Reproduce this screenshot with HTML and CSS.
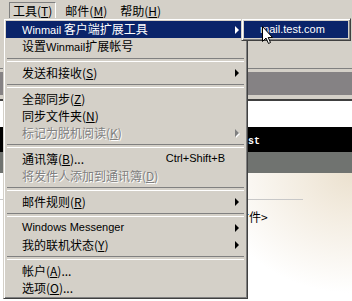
FILE: index.html
```html
<!DOCTYPE html>
<html>
<head>
<meta charset="utf-8">
<link rel="stylesheet" href="styles.css">
</head>
<body>
<div class="screen">
  <div class="menubar">
    <div class="mb-item pressed">工具(<u>T</u>)</div>
    <div class="mb-item">邮件(<u>M</u>)</div>
    <div class="mb-item">帮助(<u>H</u>)</div>
  </div>
  <div class="work">
    <div class="band face b1"></div>
    <div class="band line-mid"></div>
    <div class="band face b2"></div>
    <div class="band toolbar"></div>
    <div class="band face b3"></div>
    <div class="band line-deep"></div>
    <div class="band white"></div>
    <div class="band title"><span class="title-text">test</span></div>
    <div class="band slate"></div>
    <div class="page">
      <div class="rule"></div>
      <div class="attach">无附件&gt;</div>
    </div>
  </div>

  <div class="menu">
    <div class="mi hl"><span class="label"><span class="lat">Winmail</span> 客户端扩展工具</span><span class="arrow"></span></div>
    <div class="mi"><span class="label">设置<span class="lat">Winmail</span>扩展帐号</span></div>
    <div class="sep"></div>
    <div class="mi"><span class="label">发送和接收(<u>S</u>)</span><span class="arrow"></span></div>
    <div class="sep"></div>
    <div class="mi"><span class="label">全部同步(<u>Z</u>)</span></div>
    <div class="mi"><span class="label">同步文件夹(<u>N</u>)</span></div>
    <div class="mi dis"><span class="label">标记为脱机阅读(<u>K</u>)</span><span class="arrow"></span></div>
    <div class="sep"></div>
    <div class="mi"><span class="label">通讯簿(<u>B</u>)...</span><span class="key lat">Ctrl+Shift+B</span></div>
    <div class="mi dis"><span class="label">将发件人添加到通讯簿(<u>D</u>)</span></div>
    <div class="sep"></div>
    <div class="mi"><span class="label">邮件规则(<u>R</u>)</span><span class="arrow"></span></div>
    <div class="sep"></div>
    <div class="mi"><span class="label lat">Windows Messenger</span><span class="arrow"></span></div>
    <div class="mi"><span class="label">我的联机状态(<u>Y</u>)</span><span class="arrow"></span></div>
    <div class="sep"></div>
    <div class="mi"><span class="label">帐户(<u>A</u>)...</span></div>
    <div class="mi"><span class="label">选项(<u>O</u>)...</span></div>
  </div>

  <div class="submenu">
    <div class="mi hl"><span class="label lat">mail.test.com</span></div>
  </div>

  <svg class="cursor" width="12" height="20" viewBox="0 0 12 20">
    <path d="M0.5 0.5 L0.5 15.5 L4 12 L6.5 17.5 L8.5 16.5 L6.2 11.5 L10.5 11.5 Z" fill="#fff" stroke="#000" stroke-width="1" stroke-linejoin="miter"/>
  </svg>
</div>
</body>
</html>
```

FILE: styles.css
```css
* {
  box-sizing: border-box;
  margin: 0;
  padding: 0;
}

body {
  margin: 0;
  width: 352px;
  height: 301px;
  overflow: hidden;
  background: #d4d0c8;
  font-family: "Noto Sans CJK SC", sans-serif;
  font-size: 12px;
  color: #000;
}

u {
  text-decoration: underline;
  text-underline-offset: 1px;
}

.lat {
  font-family: "Liberation Sans", sans-serif;
  font-size: 11px;
}

.screen {
  position: relative;
  width: 352px;
  height: 301px;
  overflow: hidden;
  display: flex;
  flex-direction: column;
}

/* ---------- menu bar ---------- */
.menubar {
  flex: none;
  height: 19px;
  display: flex;
  align-items: flex-start;
  gap: 5px;
  padding-left: 9px;
  background: #d4d0c8;
}

.mb-item {
  height: 17px;
  margin-top: 2px;
  padding: 0 3px;
  line-height: 15px;
  border: 1px solid transparent;
}

.mb-item.pressed {
  border-color: #808080 #ffffff #ffffff #808080;
}

/* ---------- background window ---------- */
.work {
  flex: 1;
  display: flex;
  flex-direction: column;
}

.band {
  flex: none;
}

.face { background: #d4d0c8; }
.b1 { height: 49px; }
.line-mid { height: 1px; background: #808080; }
.b2 { height: 3px; }
.toolbar { height: 23px; background: #858284; }
.b3 { height: 4px; }
.line-deep { height: 2px; background: #404040; }
.white { height: 26px; background: #ffffff; }

.title {
  height: 25px;
  background: #000000;
  display: flex;
  align-items: center;
  padding-left: 236px;
}

.title-text {
  font-family: "Liberation Mono", monospace;
  font-weight: bold;
  font-size: 10px;
  color: #ffffff;
  line-height: 10px;
  margin-top: 4px;
}

.slate { height: 21px; background: #707370; }

.page {
  flex: 1;
  background:
    radial-gradient(ellipse 140px 120px at 100% 0%, #ebe1cf 0%, #f3ece0 35%, rgba(255,255,255,0) 100%),
    #ffffff;
  padding-top: 26px;
}

.rule {
  width: 303px;
  height: 1px;
  background: #c8c8c8;
}

.attach {
  margin-top: 8px;
  padding-left: 225px;
  line-height: 17px;
}

/* ---------- popup menus ---------- */
.menu,
.submenu {
  position: absolute;
  top: 18px;
  background: #d4d0c8;
  border: 1px solid;
  border-color: #d4d0c8 #404040 #404040 #d4d0c8;
  box-shadow: inset 1px 1px 0 #ffffff, inset -1px -1px 0 #808080;
  padding: 2px;
}

.menu {
  left: 3px;
  width: 245px;
}

.submenu {
  left: 241px;
  width: 110px;
}

.mi {
  height: 17px;
  display: flex;
  align-items: center;
  padding: 0 6px 0 16px;
  line-height: 17px;
  white-space: nowrap;
}

.label {
  flex: 1;
}

.key {
  margin-right: 14px;
}

.arrow {
  width: 0;
  height: 0;
  border-left: 4px solid #000;
  border-top: 4px solid transparent;
  border-bottom: 4px solid transparent;
  margin-left: auto;
}

.mi.hl {
  background: #0a246a;
  color: #ffffff;
}

.mi.hl .arrow {
  border-left-color: #ffffff;
}

.mi.dis {
  color: #808080;
  text-shadow: 1px 1px 0 #ffffff;
}

.mi.dis .arrow {
  border-left-color: #808080;
  filter: drop-shadow(1px 1px 0 #ffffff);
}

.sep {
  height: 9px;
  padding: 3px 1px 4px;
}

.sep::before {
  content: "";
  display: block;
  height: 2px;
  border-top: 1px solid #808080;
  border-bottom: 1px solid #ffffff;
}

.cursor {
  position: absolute;
  left: 262px;
  top: 26px;
}
```
